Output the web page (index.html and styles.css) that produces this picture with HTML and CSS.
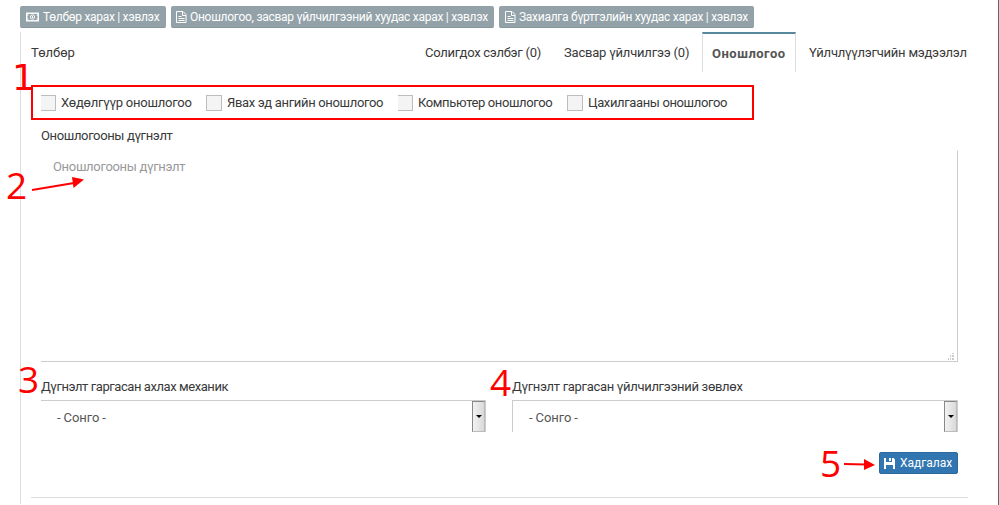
FILE: index.html
```
<!DOCTYPE html>
<html lang="mn">
<head>
<meta charset="utf-8">
<title>Оношлогоо</title>
<link rel="stylesheet" href="styles.css">
</head>
<body>
<div class="page">
  <div class="toolbar">
    <button class="btn pay"><svg width="13" height="10" viewBox="0 0 13 10" fill="none" stroke="currentColor"><rect x=".7" y="1.2" width="11.6" height="7.6" stroke-width="1.4"/><circle cx="6.5" cy="5" r="2.1"/><path d="M6.5 4v2M1 3h1.5M10.5 3H12M1 7h1.5M10.5 7H12"/></svg><span>Төлбөр харах | хэвлэх</span></button>
    <button class="btn diag"><svg width="11" height="12" viewBox="0 0 11 12" fill="none" stroke="currentColor"><path d="M.5.5H7l3 3v8H.5zM6.5.8V4.500h3.300M2.500 5.500h3M2.500 7.500h6M2.500 9.500h6"/></svg><span>Оношлогоо, засвар үйлчилгээний хуудас харах | хэвлэх</span></button>
    <button class="btn order"><svg width="11" height="12" viewBox="0 0 11 12" fill="none" stroke="currentColor"><path d="M.5.5H7l3 3v8H.5zM6.5.8V4.500h3.300M2.500 5.500h3M2.500 7.500h6M2.500 9.500h6"/></svg><span>Захиалга бүртгэлийн хуудас харах | хэвлэх</span></button>
  </div>
  <main class="panel">
    <header class="head">
      <h1>Төлбөр</h1>
      <nav class="tabs">
        <a class="tab parts">Солигдох сэлбэг (0)</a>
        <a class="tab repair">Засвар үйлчилгээ (0)</a>
        <a class="tab active">Оношлогоо</a>
        <a class="tab client">Үйлчлүүлэгчийн мэдээлэл</a>
      </nav>
    </header>
    <div class="checks">
      <label class="c1"><i class="box open"></i><span>Хөдөлгүүр оношлогоо</span></label>
      <label class="c2"><i class="box"></i><span>Явах эд ангийн оношлогоо</span></label>
      <label class="c3"><i class="box open"></i><span>Компьютер оношлогоо</span></label>
      <label class="c4"><i class="box"></i><span>Цахилгааны оношлогоо</span></label>
    </div>
    <div class="form">
      <div class="label sum">Оношлогооны дүгнэлт</div>
      <div class="area"><span>Оношлогооны дүгнэлт</span>
        <svg class="grip" width="7" height="7" viewBox="0 0 7 7" fill="#ccc"><path d="M4 0h2v1H4zM2 2h1v2H2zM4 2h2v2H4zM0 5h1v2H0zM2 5h1v2H2zM4 5h2v2H4z"/></svg>
      </div>
      <div class="row">
        <div class="field">
          <div class="label mech">Дүгнэлт гаргасан ахлах механик</div>
          <div class="select noleft"><span>- Сонго -</span><i class="drop"></i></div>
        </div>
        <div class="field">
          <div class="label adv">Дүгнэлт гаргасан үйлчилгээний зөвлөх</div>
          <div class="select"><span>- Сонго -</span><i class="drop"></i></div>
        </div>
      </div>
      <div class="actions"><button class="btn save"><svg width="11" height="11" viewBox="0 0 11 11" fill="currentColor"><path d="M0 0h2v4h6V0h1.500L11 1.500V11H9V7H2v4H0zM5 0h2v3H5z"/></svg><span>Хадгалах</span></button></div>
    </div>
    <hr>
  </main>
  <span class="num n1">1</span>
  <span class="num n2">2</span>
  <span class="num n3">3</span>
  <span class="num n4">4</span>
  <span class="num n5">5</span>
  <svg class="arrow a2" width="54" height="14" viewBox="0 0 54 14"><path d="M0 13 42 6" stroke="red" stroke-width="2"/><path d="M40 0 52 2.500 41.500 11z" fill="red"/></svg>
  <svg class="arrow a5" width="32" height="12" viewBox="0 0 32 12"><path d="M0 6 22 6.500" stroke="red" stroke-width="2"/><path d="M20 1 31 7 20 12z" fill="red"/></svg>
</div>
</body>
</html>
```
FILE: styles.css
```
* { box-sizing: border-box; }
body { margin: 0; background: #fff; color: #393939; font: 13px/18px Roboto, "Liberation Sans", sans-serif; }
.page { position: relative; width: 999px; height: 505px; padding: 6px 30px 0 20px; border-right: 1px solid #666; overflow: hidden; }
.toolbar { display: flex; gap: 5px; height: 27px; }
.btn { display: flex; align-items: center; height: 22px; padding: 0 0 0 6px; border: 0; border-radius: 2px; color: #fff; font: 12px/20px Roboto, sans-serif; white-space: nowrap; background: #93a2a8; border-bottom: 1px solid #87979d; gap: 4px; }
.btn svg { flex: none; }
.pay { width: 146px; letter-spacing: -.3px; }
.diag { width: 323px; padding-left: 5px; gap: 3px; letter-spacing: -.28px; }
.order { width: 255px; letter-spacing: -.28px; gap: 3px; }
.panel { height: 472px; border-left: 1px solid #ddd; padding-left: 10px; width: 948px; }
.head { display: flex; justify-content: space-between; height: 39px; margin-top: -1px; white-space: nowrap; }
h1 { margin: 0; font: 13px/41px Roboto, sans-serif; }
.tabs { display: flex; line-height: 41px; }
.tab.parts { width: 139px; letter-spacing: -.27px; }
.tab.repair { width: 138px; letter-spacing: -.2px; }
.tab.active { width: 94px; height: 40px; line-height: 40px; padding-left: 9px; border: 1px solid #ddd; border-top: 2px solid #57889c; border-bottom: 0; color: #555; font-weight: 700; letter-spacing: .5px; }
.tab.client { width: 172px; padding-left: 13px; letter-spacing: -.22px; }
.checks { display: flex; align-items: center; width: 723px; height: 35px; margin-top: 14px; padding-left: 8px; border: 2px solid red; white-space: nowrap; }
.checks label { display: flex; align-items: center; gap: 5px; }
.c1 { width: 165px; letter-spacing: -.23px; }
.c2 { width: 192px; letter-spacing: -.33px; }
.c3 { width: 169px; letter-spacing: -.38px; }
.c4 { letter-spacing: -.37px; }
.box { width: 16px; height: 16px; border: 1px solid #bdbdbd; background: #f4f4f4; }
.box.open { width: 15px; border-left: 0; }
.form { padding: 6px 0 0 10px; width: 927px; }
.label { height: 24px; line-height: 19px; white-space: nowrap; }
.sum { letter-spacing: -.36px; }
.mech { letter-spacing: -.43px; }
.adv { letter-spacing: -.31px; }
.area { position: relative; height: 212px; border: 1px solid #ccc; border-left: 0; border-top-color: transparent; padding: 7px 12px; color: #999; letter-spacing: -.32px; }
.grip { position: absolute; right: 2px; bottom: 1px; }
.row { display: flex; gap: 26px; margin-top: 16px; }
.field { width: 445px; }
.field + .field { width: 446px; }
.field .label { height: 22px; line-height: 18px; }
.select { display: flex; justify-content: space-between; height: 32px; border: 1px solid #ccc; border-bottom: 0; line-height: 33px; color: #555; padding-left: 16px; letter-spacing: -.1px; }
.noleft { border-left: 0; }
.drop { display: flex; width: 13px; height: 31px; align-items: center; justify-content: center; background: linear-gradient(90deg, #f2f2f2, #d9d9d9); border: 1px solid #888; border-right-color: #bbb; border-bottom-color: #bbb; }
.drop::after { content: ""; border: 3px solid transparent; border-top-color: #000; border-bottom: 0; }
.actions { display: flex; justify-content: flex-end; margin-top: 20px; }
.save { width: 79px; background: #3276b1; border: 1px solid #2c699d; padding-left: 4px; gap: 5px; }
hr { width: 937px; margin: 23px 0 0; border: 0; border-top: 1px solid #ddd; }
.num { position: absolute; color: red; font: 37px/40px "Open Sans", sans-serif; }
.n1 { left: 12px; top: 58px; font-family: "DejaVu Sans", sans-serif; font-size: 36px; }
.n2 { left: 6px; top: 165px; }
.n3 { left: 18px; top: 359px; }
.n4 { left: 490px; top: 362px; }
.n5 { left: 820px; top: 443px; }
.arrow { position: absolute; }
.a2 { left: 32px; top: 177px; }
.a5 { left: 844px; top: 458px; }
```
